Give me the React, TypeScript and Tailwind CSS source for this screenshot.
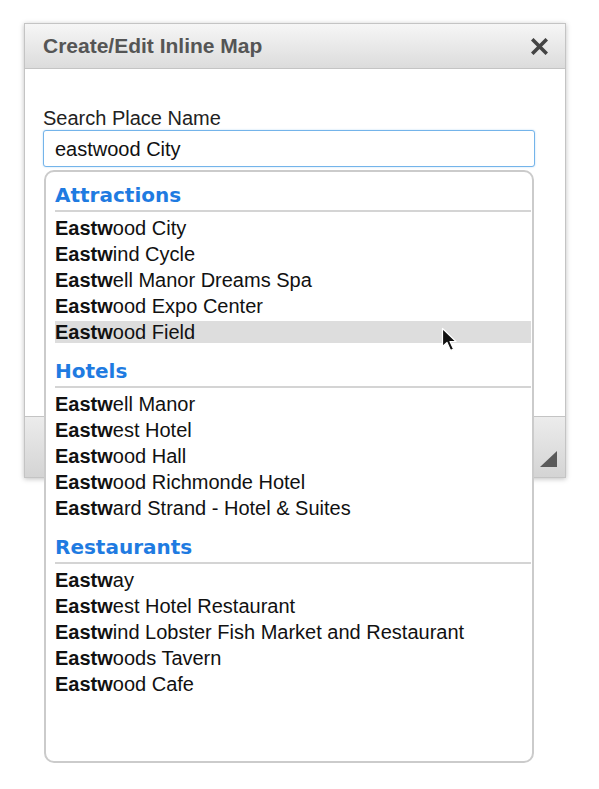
import React from "react";

type Section = {
	title: string;
	items: string[];
};

const sections: Section[] = [
	{
		title: "Attractions",
		items: [
			"Eastwood City",
			"Eastwind Cycle",
			"Eastwell Manor Dreams Spa",
			"Eastwood Expo Center",
			"Eastwood Field",
		],
	},
	{
		title: "Hotels",
		items: [
			"Eastwell Manor",
			"Eastwest Hotel",
			"Eastwood Hall",
			"Eastwood Richmonde Hotel",
			"Eastward Strand - Hotel & Suites",
		],
	},
	{
		title: "Restaurants",
		items: [
			"Eastway",
			"Eastwest Hotel Restaurant",
			"Eastwind Lobster Fish Market and Restaurant",
			"Eastwoods Tavern",
			"Eastwood Cafe",
		],
	},
];

const hovered = "Eastwood Field";

function Cursor() {
	return (
		<svg
			width="18"
			height="26"
			viewBox="0 0 18 26"
			className="absolute left-[386px] top-[6px]"
		>
			<path
				d="M1.5 1.5 L1.5 19.5 L6 15.5 L9.5 23.5 L12.5 22 L9 14.5 L15 14.5 Z"
				fill="#111"
				stroke="#fff"
				strokeWidth="1.2"
				strokeLinejoin="round"
			/>
		</svg>
	);
}

export default function App() {
	return (
		<div className="min-h-[789px] w-[599px] bg-white pt-[23px] font-['Liberation_Sans',Arial,sans-serif]">
			<div className="ml-[24px] w-[542px] border border-[#c4c4c4] shadow-[0_1px_5px_rgba(0,0,0,0.25)]">
				{/* header */}
				<div className="flex h-[45px] items-center justify-between border-b border-[#c4c4c4] bg-gradient-to-b from-[#f6f6f6] to-[#dcdcdc] pl-[18px] pr-[17px]">
					<span className="text-[21px] font-bold text-[#555]">
						Create/Edit Inline Map
					</span>
					<svg width="17" height="17" viewBox="0 0 17 17">
						<path
							d="M2.5 2.5 L14.5 14.5 M14.5 2.5 L2.5 14.5"
							stroke="#444"
							strokeWidth="3.6"
							strokeLinecap="square"
						/>
					</svg>
				</div>

				{/* body */}
				<div className="h-[347px] bg-white px-[18px] pt-[37px]">
					<label className="block h-[24px] text-[20px] leading-[24px] text-[#222]">
						Search Place Name
					</label>
					<div className="relative z-10 w-[492px]">
						<input
							type="text"
							value="eastwood City"
							readOnly
							className="h-[37px] w-full rounded-[3px] border border-[#74b4ea] bg-white px-[11px] pt-[1px] text-[20px] text-[#111] shadow-[0_0_2px_rgba(80,160,230,0.4)] outline-none"
						/>
						{/* dropdown */}
						<div className="absolute left-[1px] top-[40px] h-[593px] w-[490px] rounded-[10px] border-2 border-[#cbcbcb] bg-white pl-[9px] pr-[1px] pt-[11px]">
							{sections.map((section, i) => (
								<div key={section.title} className={i > 0 ? "mt-[16px]" : ""}>
									<div className="border-b-2 border-[#d4d4d4] pb-[3px] font-['DejaVu_Sans',Verdana,sans-serif] text-[20px] font-bold leading-[24px] text-[#1f7be1]">
										{section.title}
									</div>
									<div className="pt-[1px]">
										{section.items.map((item) => (
											<div
												key={item}
												className={
													"relative mt-[4px] h-[22px] text-[20px] leading-[22px] text-[#111] " +
													(item === hovered ? "bg-[#dddddd]" : "")
												}
											>
												<b className="font-bold">{item.slice(0, 5)}</b>
												{item.slice(5)}
												{item === hovered && <Cursor />}
											</div>
										))}
									</div>
								</div>
							))}
						</div>
					</div>
				</div>

				{/* footer */}
				<div className="relative h-[61px] border-t border-[#c4c4c4] bg-gradient-to-b from-[#ececec] to-[#d4d4d4]">
					<svg
						width="17"
						height="16"
						viewBox="0 0 17 16"
						className="absolute bottom-[10px] right-[8px]"
					>
						<path d="M17 0 L17 16 L0 16 Z" fill="#5a5a5a" />
					</svg>
				</div>
			</div>
		</div>
	);
}
